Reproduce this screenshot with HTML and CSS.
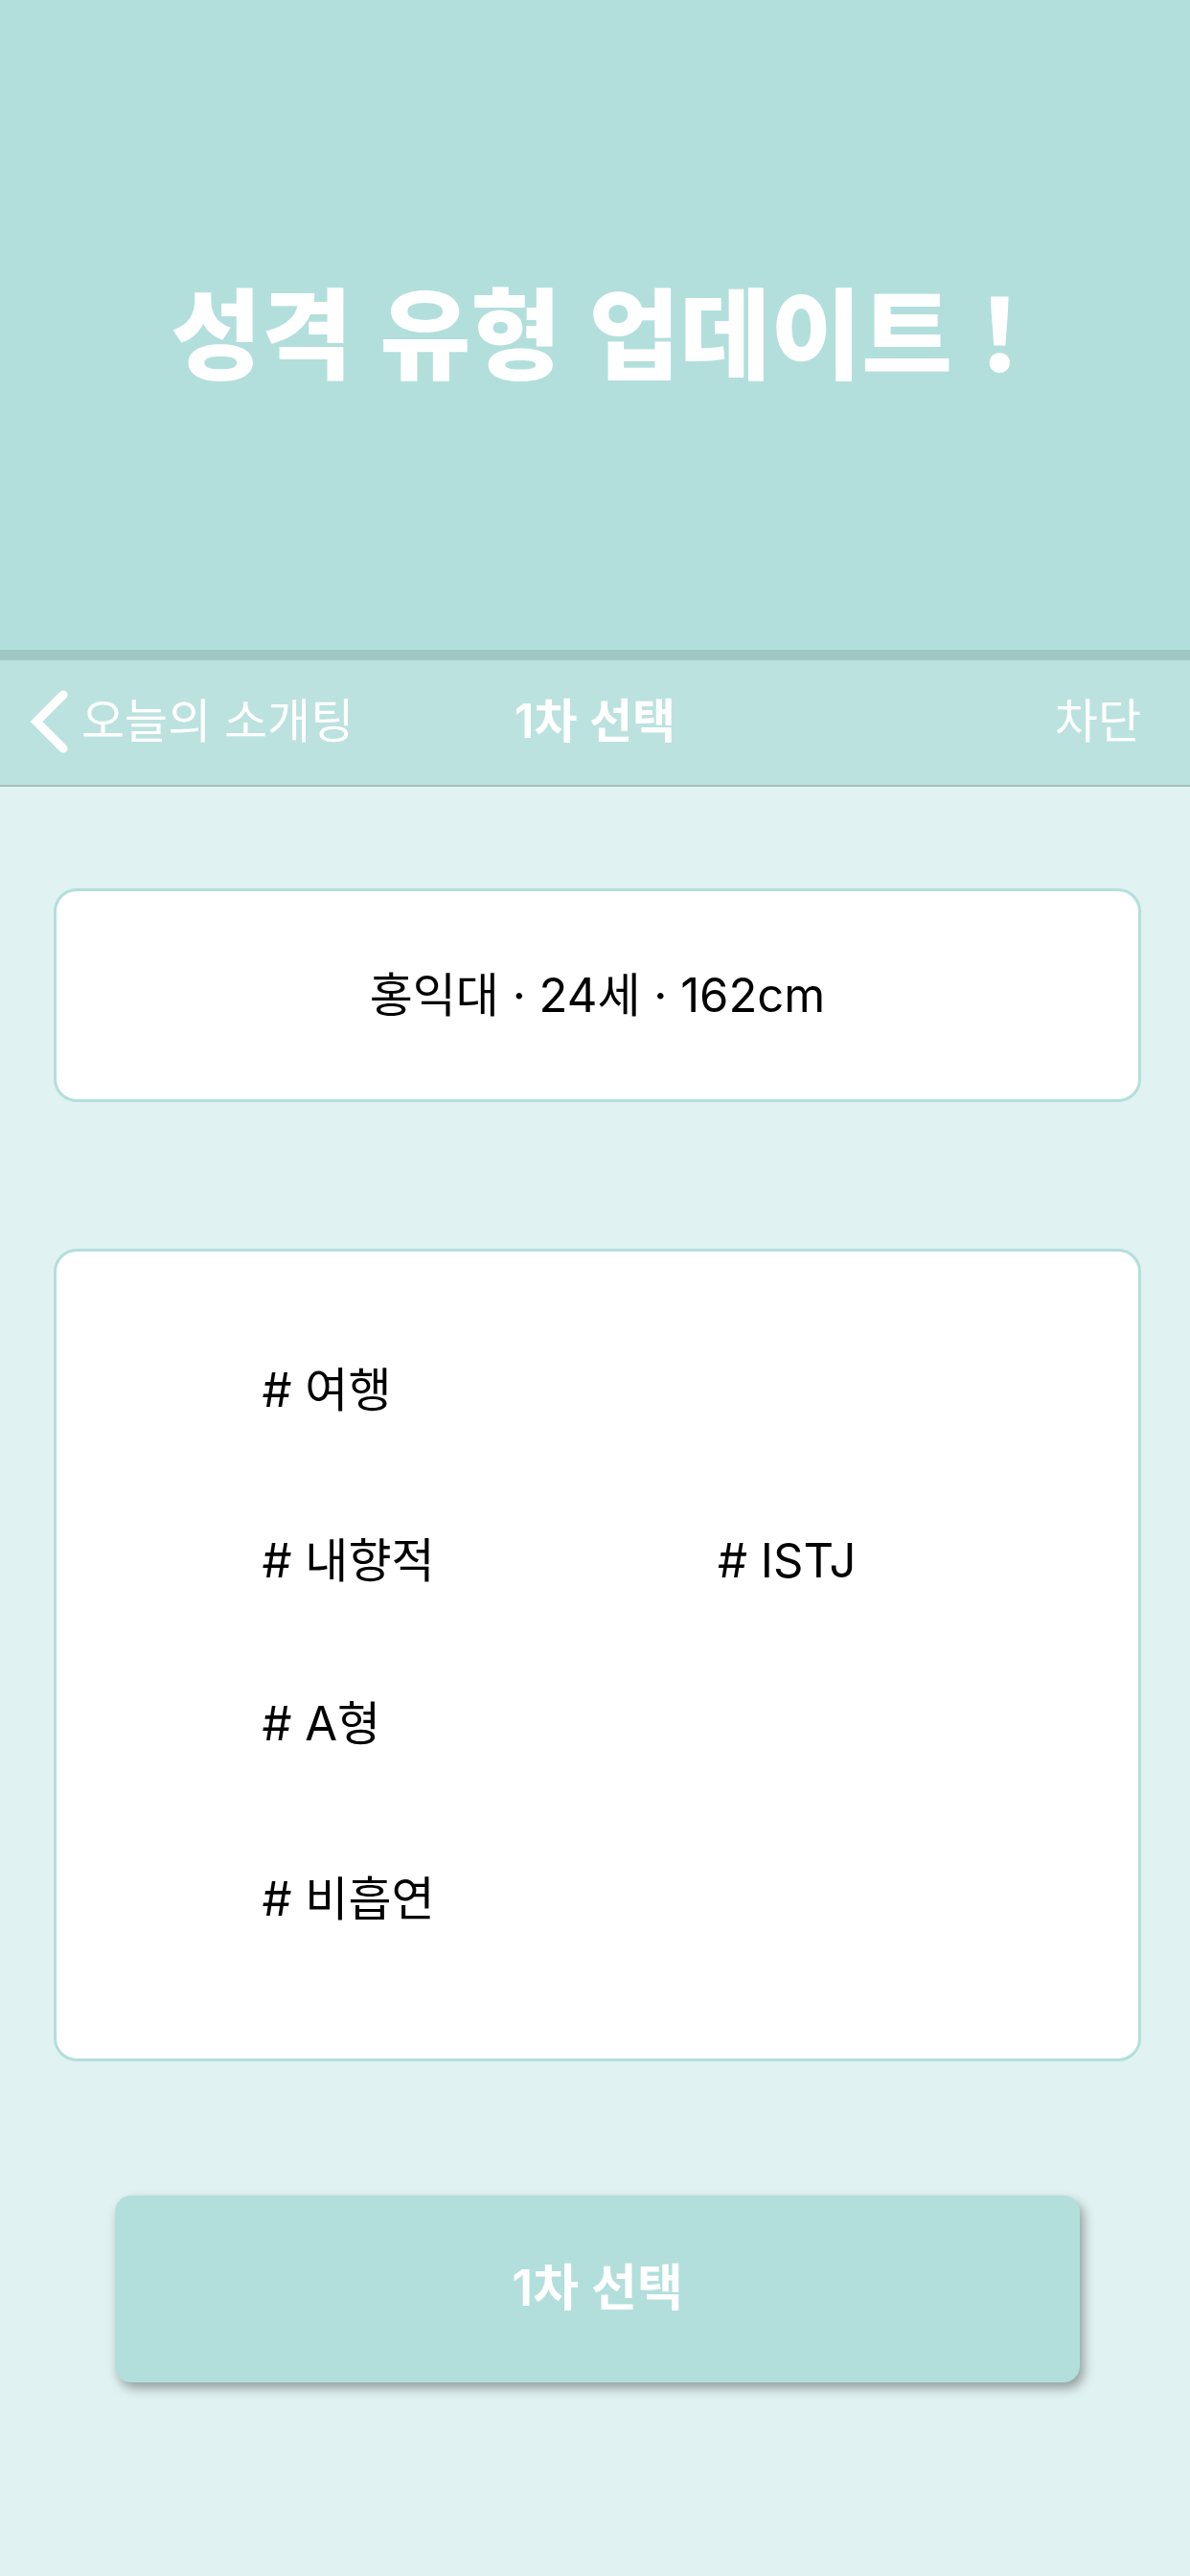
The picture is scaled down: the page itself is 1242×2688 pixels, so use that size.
FILE: index.html
```html
<!DOCTYPE html>
<html lang="ko">
<head>
  <meta charset="UTF-8" />
  <title>1차 선택</title>
  <meta name="viewport" content="width=device-width, initial-scale=1.0" />
  <link rel="stylesheet" href="styles.css">
</head>

<body>

  <!-- Banner -->
  <header class="banner">
    <h1>성격 유형 업데이트 !</h1>
  </header>

  <!-- Navigation -->
  <nav class="navbar">
    <a class="back" href="#today">
      <svg class="back-icon" viewBox="0 0 38 64" aria-hidden="true">
        <path d="M33 4 L5 32 L33 60" fill="none" stroke="#fff" stroke-width="9" stroke-linecap="round" />
      </svg>
      오늘의 소개팅
    </a>
    <h2>1차 선택</h2>
    <button type="button" class="block">차단</button>
  </nav>

  <!-- Main -->
  <main>
    <section class="card profile">
      <p>홍익대 · 24세 · 162cm</p>
    </section>

    <!-- Tags -->
    <section class="card">
      <ul class="tags">
        <li class="wide"># 여행</li>
        <li># 내향적</li>
        <li># ISTJ</li>
        <li class="wide"># A형</li>
        <li class="wide"># 비흡연</li>
      </ul>
    </section>

    <button type="button" class="select">1차 선택</button>
  </main>

</body>
</html>
```

FILE: styles.css
```css
* {
  box-sizing: border-box;
}

body {
  margin: 0;
  background-color: #e0f2f1;
  color: #000;
  font-family: Inter, "Noto Sans CJK KR", sans-serif;
  font-size: 49px;
  line-height: 72px;
}

h1, h2, p, ul {
  margin: 0;
  padding: 0;
}

/* Banner */
.banner {
  padding: 268px 24px 258px;
  background-color: #b2dfdc;
  border-bottom: 11px solid #a0c7c4;
  color: white;
  text-align: center;
}

.banner h1 {
  font-family: "Noto Sans CJK KR", sans-serif;
  font-size: 103px;
  line-height: 152px;
  font-weight: 900;
}

/* Navigation */
.navbar {
  display: grid;
  grid-template-columns: 1fr auto 1fr;
  align-items: center;
  padding: 28px 33px 30px;
  background-color: #bbe2df;
  border-bottom: 2px solid #a7bfbe;
  color: white;
}

.navbar h2 {
  font-size: 49px;
  font-weight: 600;
}

.back {
  display: flex;
  align-items: center;
  gap: 14px;
  color: white;
  text-decoration: none;
}

.back-icon {
  width: 38px;
  height: 64px;
  overflow: visible;
}

button {
  padding: 0;
  border: none;
  background: none;
  color: white;
  font: inherit;
  cursor: pointer;
}

.block {
  justify-self: end;
  padding-right: 18px;
}

/* Cards */
main {
  display: flex;
  flex-direction: column;
  padding: 106px 51px 120px 56px;
}

.card {
  margin-bottom: 153px;
  background-color: white;
  border: 3px solid #b2dfdc;
  border-radius: 24px;
}

.profile {
  padding: 73px 24px 72px;
  text-align: center;
}

.tags {
  display: grid;
  grid-template-columns: 52% 1fr;
  grid-template-rows: 180px 176px 164px 202px;
  align-items: center;
  padding: 55px 0 65px 19%;
  list-style: none;
}

.tags .wide {
  grid-column: 1 / -1;
}

/* Select button */
.select {
  margin: -13px 64px 0;
  padding: 61px 0 62px;
  border-radius: 17px;
  background-color: #b2dfdc;
  box-shadow: 4px 6px 12px rgba(0, 0, 0, 0.35);
  font-size: 52px;
  font-weight: 600;
}
```
